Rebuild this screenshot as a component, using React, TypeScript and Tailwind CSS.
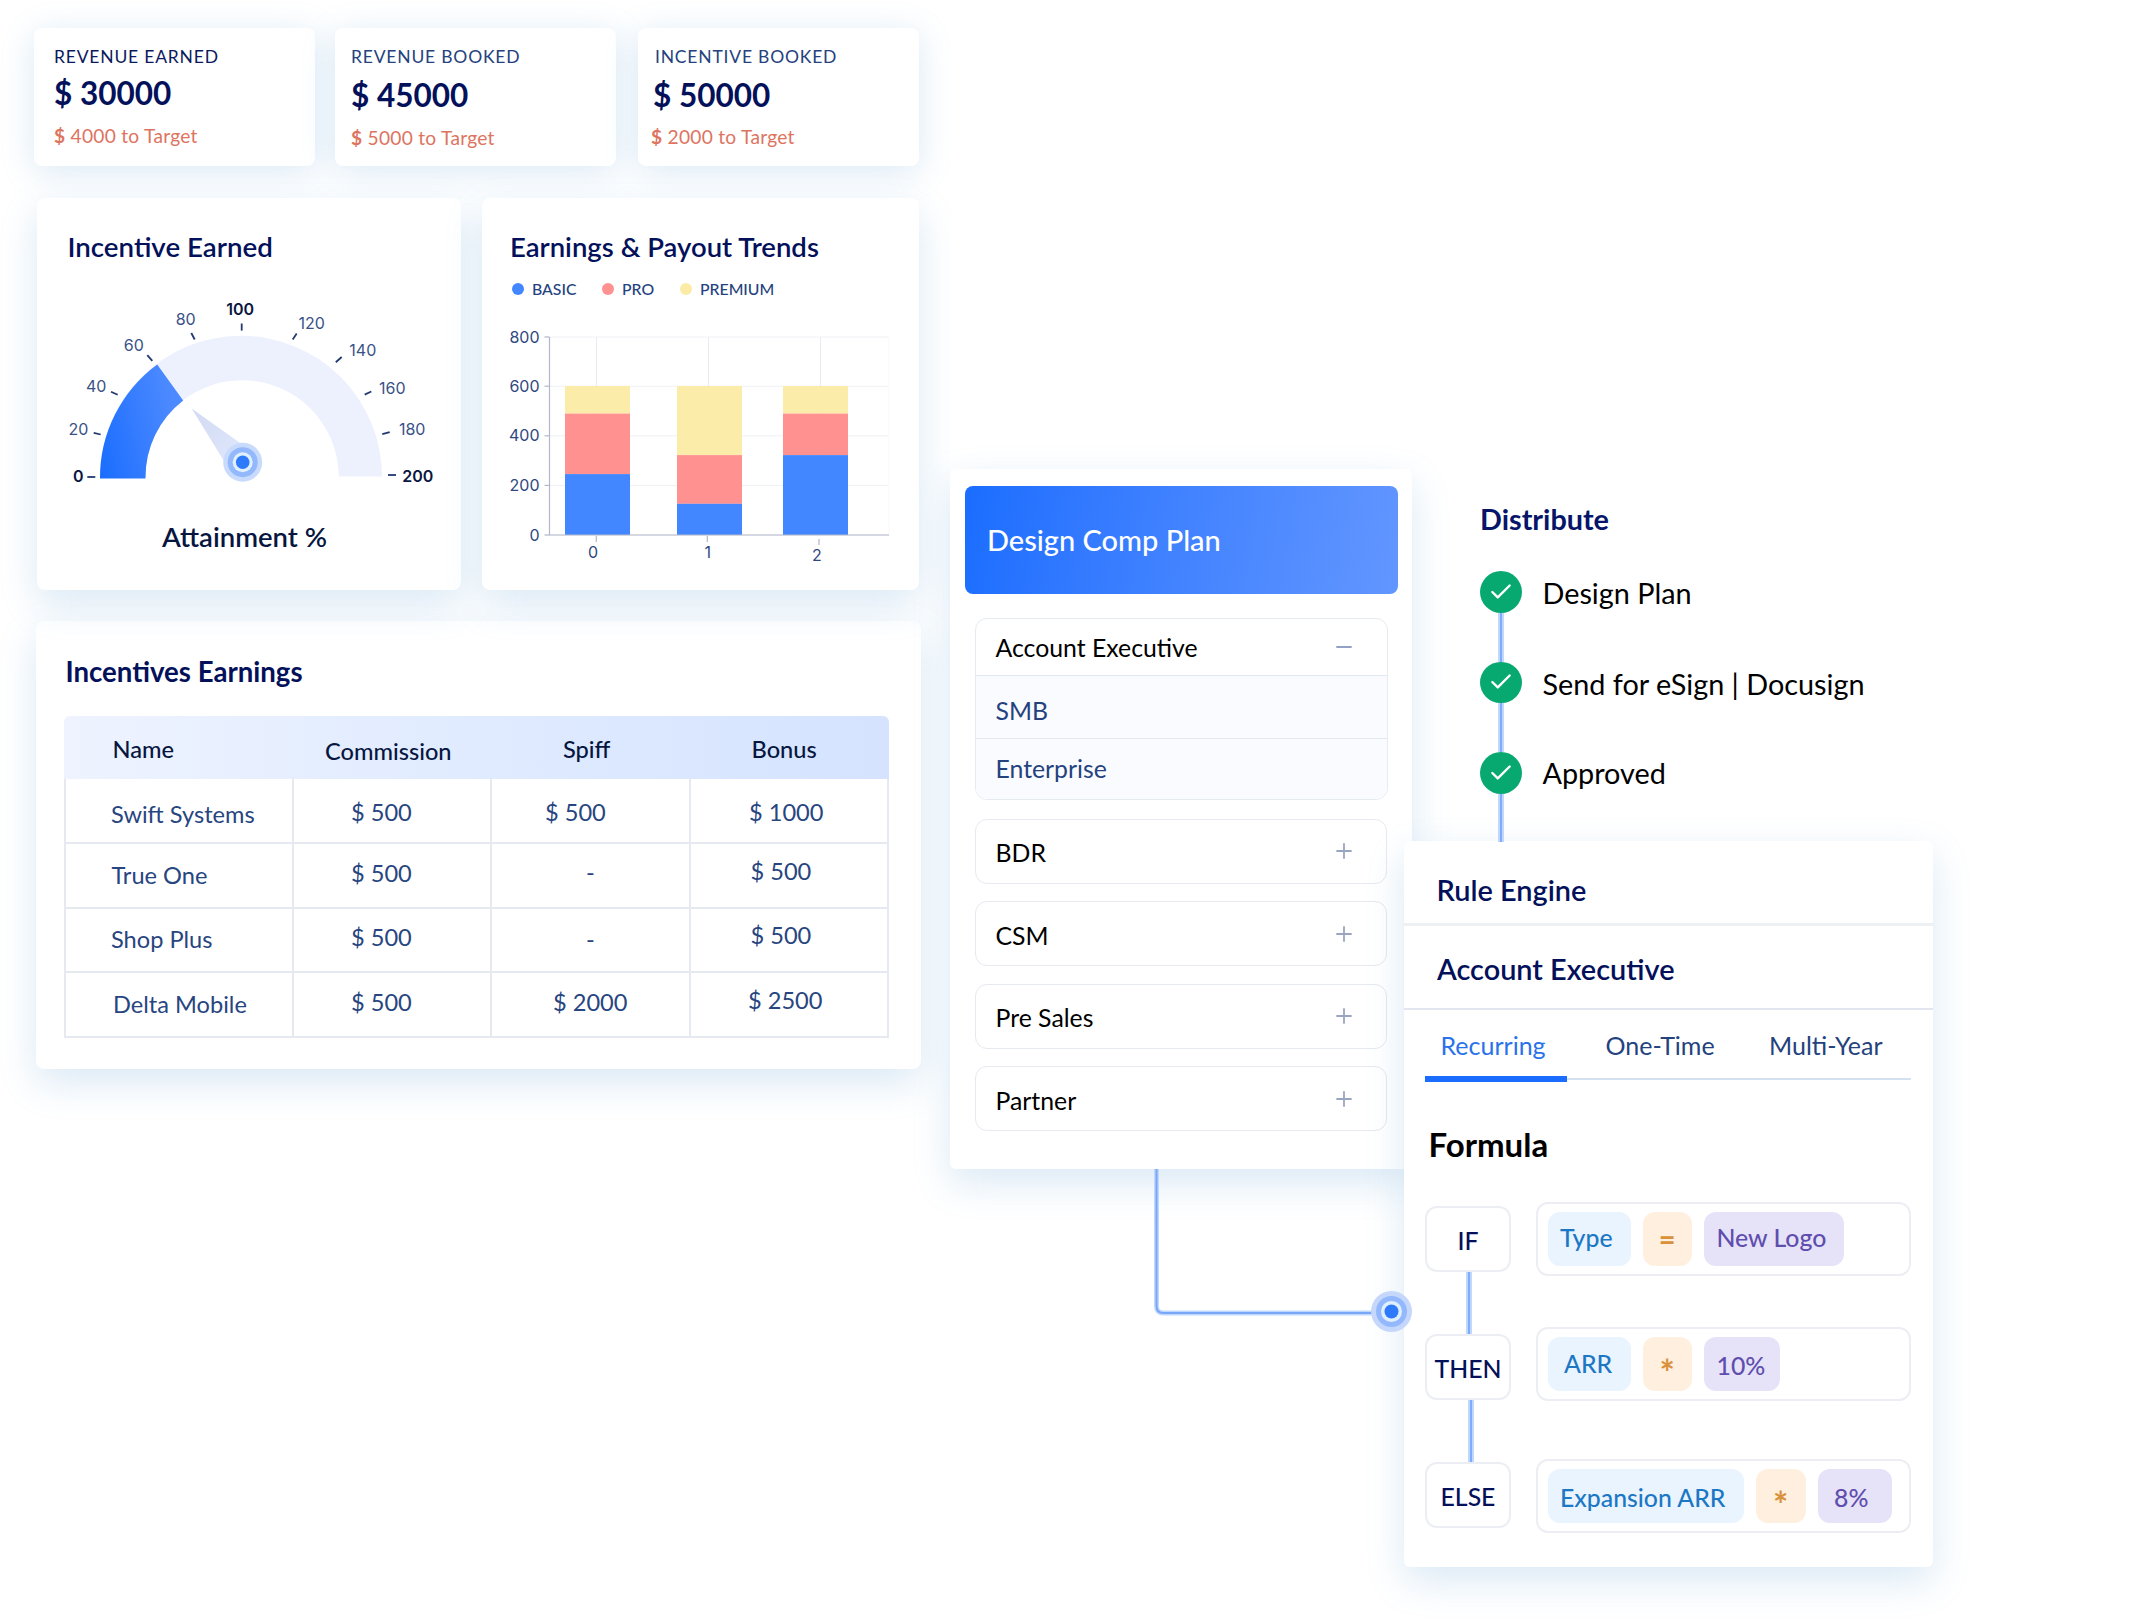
import { ReactNode } from 'react';
import { Check, Minus, Plus } from 'lucide-react';

const KPI_SHADOW = 'shadow-[0_6px_34px_rgba(70,145,205,0.2)]';
const CARD_SHADOW = 'shadow-[0_14px_38px_rgba(70,145,205,0.2)]';

const kpis = [
  { label: 'REVENUE EARNED', value: '$ 30000', target: '4000 to Target', labelCls: 'text-[#0b1a5e]', card: 'pl-[20px]', valueCls: 'mt-[10px]', targetCls: 'mt-[15.5px]' },
  { label: 'REVENUE BOOKED', value: '$ 45000', target: '5000 to Target', labelCls: 'text-[#24427e]', card: 'ml-5 pl-[16px]', valueCls: 'mt-[12px]', targetCls: 'mt-[15.5px]' },
  { label: 'INCENTIVE BOOKED', value: '$ 50000', target: '2000 to Target', labelCls: 'text-[#24427e] pl-[2px]', card: 'ml-[22px] pl-[15px]', valueCls: 'mt-[12px]', targetCls: 'mt-[14.5px] -ml-[2px]' },
];

const gaugeTicks = [
  { label: '0', x: 78.3, y: 476, line: [87.3, 477, 95.3, 477], strong: true },
  { label: '20', x: 78.5, y: 429.4, line: [93.7, 432.8, 100.7, 434.5] },
  { label: '40', x: 96.2, y: 386, line: [111, 391.7, 117.7, 394.8] },
  { label: '60', x: 133.8, y: 344.8, line: [147.3, 355.2, 152.3, 360.8] },
  { label: '80', x: 185.7, y: 319.5, line: [191.3, 333, 194.7, 339.5] },
  { label: '100', x: 240.2, y: 309.2, line: [241.7, 323.5, 241.7, 330.6], strong: true },
  { label: '120', x: 311.7, y: 323.4, line: [296.7, 333.5, 292.7, 339.5] },
  { label: '140', x: 362.8, y: 350.7, line: [341.7, 357, 335.8, 362.2] },
  { label: '160', x: 392.3, y: 387.9, line: [371.3, 391.5, 364.7, 394.6] },
  { label: '180', x: 412.2, y: 429, line: [389.7, 432.2, 382.3, 434.2] },
  { label: '200', x: 417.8, y: 476, line: [388, 475, 396, 475], strong: true },
];

const yAxis = [
  { label: '800', y: 337 },
  { label: '600', y: 386.2 },
  { label: '400', y: 435.8 },
  { label: '200', y: 485.4 },
  { label: '0', y: 535 },
];

const bars = [
  { x: 565, pro: 413.6, basic: 474.1 },
  { x: 677, pro: 455.1, basic: 503.8 },
  { x: 783, pro: 413.6, basic: 455.1 },
];

const xAxis = [
  { label: '0', x: 593, y: 552.4, tx: 596.3, ty: 536 },
  { label: '1', x: 707.7, y: 552.4, tx: 707.3, ty: 536 },
  { label: '2', x: 817, y: 555.5, tx: 819, ty: 539 },
];

const legend = [
  { label: 'BASIC', dot: 'bg-[#4287ff]', cls: 'w-[90px]' },
  { label: 'PRO', dot: 'bg-[#ff9191]', cls: 'w-[78px]' },
  { label: 'PREMIUM', dot: 'bg-[#fbeba6]', cls: '' },
];

const rows = [
  [
    { text: 'Swift Systems', cls: 'pl-[45px] pt-[20px]' },
    { text: '$ 500', cls: 'pl-[57px] pt-[18px]' },
    { text: '$ 500', cls: 'pl-[53px] pt-[18px]' },
    { text: '$ 1000', cls: 'pl-[58px] pt-[18px]' },
  ],
  [
    { text: 'True One', cls: 'pl-[45.5px] pt-[16px]' },
    { text: '$ 500', cls: 'pl-[57px] pt-[14px]' },
    { text: '-', cls: 'pl-[94px] pt-[13.5px]' },
    { text: '$ 500', cls: 'pl-[59.5px] pt-[12px]' },
  ],
  [
    { text: 'Shop Plus', cls: 'pl-[45px] pt-[15.5px]' },
    { text: '$ 500', cls: 'pl-[57px] pt-[13.5px]' },
    { text: '-', cls: 'pl-[94px] pt-[15px]' },
    { text: '$ 500', cls: 'pl-[59.5px] pt-[11.5px]' },
  ],
  [
    { text: 'Delta Mobile', cls: 'pl-[47px] pt-[16px]' },
    { text: '$ 500', cls: 'pl-[57px] pt-[13.5px]' },
    { text: '$ 2000', cls: 'pl-[61px] pt-[13.5px]' },
    { text: '$ 2500', cls: 'pl-[57px] pt-[11.5px]' },
  ],
];

const steps = [
  { label: 'Design Plan', cls: 'pt-[4px]' },
  { label: 'Send for eSign | Docusign', cls: 'pt-[4.5px]' },
  { label: 'Approved', cls: 'pt-[3px]' },
];

function Gauge() {
  return (
    <svg className="mt-[25px] block h-[212px] w-[425px]" viewBox="37 288 425 212">
      <defs>
        <linearGradient id="gaugeFill" x1="0" y1="1" x2="1" y2="0.7">
          <stop offset="0" stopColor="#1a6dff" />
          <stop offset="1" stopColor="#4d8aff" />
        </linearGradient>
        <linearGradient id="needleFill" x1="0" y1="0" x2="1" y2="1">
          <stop offset="0" stopColor="#d3daf3" />
          <stop offset="1" stopColor="#e0eafd" />
        </linearGradient>
      </defs>
      <path d="M100 477 A141 141 0 0 1 382 476.5 H338.7 A96.6 96.6 0 0 0 145.5 477 Z" fill="#edf1fd" />
      <path d="M100 478.5 A141 141 0 0 1 157.2 364.4 L183.2 400.5 A96.8 96.8 0 0 0 145.5 478.5 Z" fill="url(#gaugeFill)" />
      <path d="M191.7 408.5 L239.7 442.7 L252 463 L232 472 L221.5 457 Z" fill="url(#needleFill)" />
      <circle cx="242.7" cy="462.2" r="19.5" fill="#c9dbfc" />
      <circle cx="242.7" cy="462.2" r="15" fill="#94b8fc" />
      <circle cx="242.7" cy="462.2" r="10" fill="#e0f0fe" />
      <circle cx="242.7" cy="462.2" r="6.8" fill="#2f7afb" />
      {gaugeTicks.map((t) => (
        <g key={t.label}>
          <line x1={t.line[0]} y1={t.line[1]} x2={t.line[2]} y2={t.line[3]} stroke="#22386f" strokeWidth="1.8" />
          <text
            x={t.x}
            y={t.y + 5.7}
            textAnchor="middle"
            className={t.strong ? 'fill-[#0a1640] font-[Inter,sans-serif] text-[16px] font-semibold' : 'fill-[#3a5286] font-[Inter,sans-serif] text-[16px]'}
          >
            {t.label}
          </text>
        </g>
      ))}
    </svg>
  );
}

function TrendsChart() {
  return (
    <svg className="mt-[1.5px] block h-[280px] w-[437px]" viewBox="482 300 437 280">
      {yAxis.map((t) => (
        <g key={t.label}>
          <line x1="549.5" y1={t.y} x2="889" y2={t.y} stroke="#f0f1f5" strokeWidth="1" />
          <line x1="544.5" y1={t.y} x2="549.5" y2={t.y} stroke="#b3b7c9" strokeWidth="1.2" />
          <text x="539.5" y={t.y + 5.5} textAnchor="end" className="fill-[#2f487e] font-[Inter,sans-serif] text-[16px]">
            {t.label}
          </text>
        </g>
      ))}
      {[596.5, 708.5, 820.5].map((x) => (
        <line key={x} x1={x} y1="337" x2={x} y2="535" stroke="#eaebf0" strokeWidth="1" />
      ))}
      <line x1="889" y1="337" x2="889" y2="535" stroke="#f8f8fb" strokeWidth="1" />
      {bars.map((b) => (
        <g key={b.x}>
          <rect x={b.x} y="386" width="65" height={b.pro - 386} fill="#fcecaa" />
          <rect x={b.x} y={b.pro} width="65" height={b.basic - b.pro} fill="#ff9191" />
          <rect x={b.x} y={b.basic} width="65" height={535 - b.basic} fill="#4287ff" />
        </g>
      ))}
      <path d="M549.5 337 V535 H889" fill="none" stroke="#b3b7c9" strokeWidth="1.2" />
      {xAxis.map((t) => (
        <g key={t.label}>
          <line x1={t.tx} y1={t.ty} x2={t.tx} y2={t.ty + 6} stroke="#b3b7c9" strokeWidth="1.2" />
          <text x={t.x} y={t.y + 5.7} textAnchor="middle" className="fill-[#2f487e] font-[Inter,sans-serif] text-[16px]">
            {t.label}
          </text>
        </g>
      ))}
    </svg>
  );
}

function EarningsTable() {
  return (
    <div className="mt-[28px] ml-[28px] w-[825px] text-[23.6px] leading-[30px]">
      <div className="flex h-[63px] rounded-t-md bg-linear-to-r from-[#eef3ff] via-[#e0ebff] to-[#d5e3ff] font-medium text-[#07163f]">
        <div className="w-[230px] pt-[17.5px] pl-[48.5px]">Name</div>
        <div className="w-[198px] pt-[19.5px] pl-[31px]">Commission</div>
        <div className="w-[199px] pt-[17.5px] pl-[71px]">Spiff</div>
        <div className="w-[198px] pt-[17.5px] pl-[60.5px]">Bonus</div>
      </div>
      {rows.map((row) => (
        <div key={row[0].text} className="grid h-[64.75px] grid-cols-[228px_198px_199px_198px] border-b-2 border-l-2 border-[#e6eaf0] text-[#27457f]">
          {row.map((cell, i) => (
            <div key={i} className={`border-r-2 border-[#e6eaf0] ${cell.cls}`}>
              {cell.text}
            </div>
          ))}
        </div>
      ))}
    </div>
  );
}

function Dashboard() {
  return (
    <div className="h-[1618px] w-[950px] shrink-0 overflow-hidden pt-7">
      <div className="flex pl-[34px]">
        {kpis.map((k) => (
          <div key={k.label} className={`h-[138px] w-[281px] rounded-lg bg-white pt-[18.5px] ${KPI_SHADOW} ${k.card}`}>
            <div className={`text-[17.5px] leading-5 tracking-[0.8px] ${k.labelCls}`}>{k.label}</div>
            <div className={`text-[31.5px] leading-8 font-bold text-[#03105a] ${k.valueCls}`}>{k.value}</div>
            <div className={`text-[19.2px] leading-6 tracking-[0.25px] text-[#dd7460] ${k.targetCls}`}>
              <span className="font-bold">$</span> {k.target}
            </div>
          </div>
        ))}
      </div>

      <div className="mt-[32px] flex gap-[21px] pl-[37px]">
        <div className={`h-[392px] w-[424px] rounded-lg bg-white pt-[33px] ${CARD_SHADOW}`}>
          <h2 className="pl-[30.5px] text-[27.7px] leading-8 font-semibold text-[#03105a]">Incentive Earned</h2>
          <Gauge />
          <p className="mt-[21px] pl-[125px] text-[27.5px] leading-8 font-semibold text-[#07163f]">Attainment %</p>
        </div>
        <div className={`h-[392px] w-[437px] rounded-lg bg-white pt-[33px] ${CARD_SHADOW}`}>
          <h2 className="pl-[28px] text-[27.5px] leading-8 font-semibold text-[#03105a]">Earnings &amp; Payout Trends</h2>
          <div className="mt-[15.5px] flex pl-[30px] text-[15.8px] leading-5 font-medium text-[#24427e]">
            {legend.map((l) => (
              <div key={l.label} className={`flex items-center gap-2 ${l.cls}`}>
                <span className={`size-3 rounded-full ${l.dot}`} />
                {l.label}
              </div>
            ))}
          </div>
          <TrendsChart />
        </div>
      </div>

      <div className={`mt-[31px] ml-9 h-[448px] w-[885px] rounded-lg bg-white pt-[35px] ${CARD_SHADOW}`}>
        <h2 className="pl-[29.5px] text-[27.6px] leading-8 font-bold text-[#03105a]">Incentives Earnings</h2>
        <EarningsTable />
      </div>
    </div>
  );
}

function CompPlan() {
  return (
    <div className={`relative mt-[469px] h-[700px] w-[462px] shrink-0 rounded-md bg-white pt-[17px] text-[24.8px] leading-[30px] ${CARD_SHADOW}`}>
      <div className="ml-[15px] flex h-[107.5px] w-[433px] items-center rounded-lg bg-linear-100 from-[#1a6dff] to-[#6296ff] pl-[22px] text-[29px] font-medium text-white">
        Design Comp Plan
      </div>
      <div className="mt-[24px] ml-[24.5px] w-[413px] overflow-hidden rounded-xl border border-[#e6ebf0]">
        <div className="flex h-[56px] items-center justify-between pr-[30.5px] pl-[20px] text-black">
          <span className="pt-[2px]">Account Executive</span>
          <Minus className="size-6 text-[#93a2c4]" strokeWidth={1.8} />
        </div>
        <div className="h-[63px] border-t border-[#e1e8ef] bg-[#fafbff] pt-[20.5px] pl-[20px] text-[#24427e]">SMB</div>
        <div className="h-[61px] border-t border-[#e1e8ef] bg-[#fafbff] pt-[15px] pl-[20px] text-[#24427e]">Enterprise</div>
      </div>
      <div className="mt-[19px] ml-[25px] flex w-[412px] flex-col gap-[17.5px]">
        {['BDR', 'CSM', 'Pre Sales', 'Partner'].map((name) => (
          <div key={name} className="flex h-[65px] items-center justify-between rounded-xl border border-[#e6e9f0] pr-[30px] pl-[19.5px] text-black">
            <span className="pt-[4px]">{name}</span>
            <Plus className="size-6" color="#9aa5c2" strokeWidth={1.8} />
          </div>
        ))}
      </div>
    </div>
  );
}

function Link({ className }: { className: string }) {
  return <div className={`w-[6px] border-x-2 border-[#c0d8fd] bg-[#7eabfb] ${className}`} />;
}

function Distribute() {
  return (
    <div className="h-[841px] pt-[501px] pl-[76px]">
      <h2 className="text-[28.8px] leading-9 font-bold text-[#06156a]">Distribute</h2>
      <div className="mt-[34px] text-[28.8px] leading-9 text-black">
        {steps.map((s, i) => (
          <div key={s.label} className="flex gap-[21px]">
            <div className="flex flex-col items-center">
              <div className="flex size-[41.5px] items-center justify-center rounded-full bg-[#08a970]">
                <Check className="size-[26px] text-white" strokeWidth={2.2} />
              </div>
              <Link className={i === 2 ? 'h-[48px]' : 'h-[49px]'} />
            </div>
            <div className={s.cls}>{s.label}</div>
          </div>
        ))}
      </div>
    </div>
  );
}

function Keyword({ children }: { children: ReactNode }) {
  return (
    <div className="flex h-[66px] w-[86px] items-center justify-center rounded-xl border-2 border-[#eceef3] pt-1 font-medium text-[#03105a]">
      {children}
    </div>
  );
}

function Chip({ className, children }: { className: string; children: ReactNode }) {
  return <div className={`h-[54px] rounded-xl ${className}`}>{children}</div>;
}

const FIELD = 'bg-[#e9f4ff] text-[#1c77c4] font-medium';
const OPERATOR = 'bg-[#ffefdf] text-[#d9913b] font-bold w-[49.5px] text-center';
const VALUE = 'bg-[#e6e2f8] text-[#5f4eae] font-medium';

function Expression({ className = '', children }: { className?: string; children: ReactNode }) {
  return (
    <div className={`flex h-[74px] w-[375px] gap-3 rounded-xl border-2 border-[#eceef3] pt-[8px] pl-[10px] ${className}`}>
      {children}
    </div>
  );
}

function RuleEngine() {
  return (
    <div className={`h-[726px] w-[529px] rounded-md bg-white text-[24.8px] leading-[30px] ${CARD_SHADOW}`}>
      <div className="h-[85px] border-b-[3px] border-[#eef1f4] pt-[33px] pl-[32.5px] text-[28.9px] leading-8 font-semibold text-[#03105a]">Rule Engine</div>
      <div className="h-[84px] border-b-2 border-[#e3e6f0] pt-[27px] pl-[33px] text-[28.9px] leading-8 font-semibold text-[#03105a]">Account Executive</div>
      <div className="ml-[20.5px] flex h-[70px] w-[486.5px] text-[25px] text-[#24427e]">
        <div className="relative w-[142.5px] pt-[20px] pl-[16px] text-[#2a72ea]">
          Recurring
          <span className="absolute -bottom-[2px] left-0 h-[6.5px] w-full bg-[#1a6dff]" />
        </div>
        <div className="w-[164px] border-b-2 border-[#d3e1f1] pt-[20px] pl-[38.5px]">One-Time</div>
        <div className="flex-1 border-b-2 border-[#d3e1f1] pt-[20px] pl-[38px]">Multi-Year</div>
      </div>
      <h2 className="mt-[45.5px] pl-[24.5px] text-[33px] leading-9 font-bold text-black">Formula</h2>

      <div className="mt-[40px] flex pl-[21px]">
        <div className="flex w-[86px] flex-col items-center pt-[4px]">
          <Keyword>IF</Keyword>
          <Link className="ml-[2px] h-[62px]" />
          <Keyword>THEN</Keyword>
          <Link className="ml-[5px] h-[62px]" />
          <Keyword>ELSE</Keyword>
        </div>
        <div className="ml-[25px]">
          <Expression>
            <Chip className={`w-[82.5px] pt-[11.5px] pl-[12px] ${FIELD}`}>Type</Chip>
            <Chip className={`pt-[12px] text-[29px] ${OPERATOR}`}>=</Chip>
            <Chip className={`w-[140px] pt-[11.5px] pl-[12.5px] ${VALUE}`}>New Logo</Chip>
          </Expression>
          <Expression className="mt-[51.5px]">
            <Chip className={`w-[82.5px] pt-[12px] pl-[16px] ${FIELD}`}>ARR</Chip>
            <Chip className={`pt-[20px] text-[36px] ${OPERATOR}`}>*</Chip>
            <Chip className={`w-[76px] pt-[14px] pl-[12.5px] ${VALUE}`}>10%</Chip>
          </Expression>
          <Expression className="mt-[58px]">
            <Chip className={`w-[196px] pt-[14px] pl-[12px] ${FIELD}`}>Expansion ARR</Chip>
            <Chip className={`pt-[20px] text-[36px] ${OPERATOR}`}>*</Chip>
            <Chip className={`w-[74px] pt-[14px] pl-[16.5px] ${VALUE}`}>8%</Chip>
          </Expression>
        </div>
      </div>
    </div>
  );
}

export default function App() {
  return (
    <div className="relative flex h-[1618px] w-[2137px] overflow-hidden bg-white font-[Lato,sans-serif]">
      <Dashboard />
      <CompPlan />
      <div className="relative -ml-2 w-[529px] shrink-0">
        <Distribute />
        <RuleEngine />
      </div>

      {/* Connector from the comp plan card to the rule engine */}
      <svg className="absolute top-[1169px] left-[1150px] h-[170px] w-[270px]" viewBox="1150 1169 270 170">
        <path d="M1156.5 1169 V1306 Q1156.5 1313 1163.5 1313 H1375" fill="none" stroke="#c0d8fd" strokeWidth="5" />
        <path d="M1156.5 1169 V1306 Q1156.5 1313 1163.5 1313 H1375" fill="none" stroke="#78a6f8" strokeWidth="2" />
        <circle cx="1391.5" cy="1311.5" r="20.5" fill="#c5d7fb" />
        <circle cx="1391.5" cy="1311.5" r="15.5" fill="#93b8fd" />
        <circle cx="1391.5" cy="1311.5" r="10.5" fill="#e0effe" />
        <circle cx="1391.5" cy="1311.5" r="7" fill="#2f7afb" />
      </svg>
    </div>
  );
}
